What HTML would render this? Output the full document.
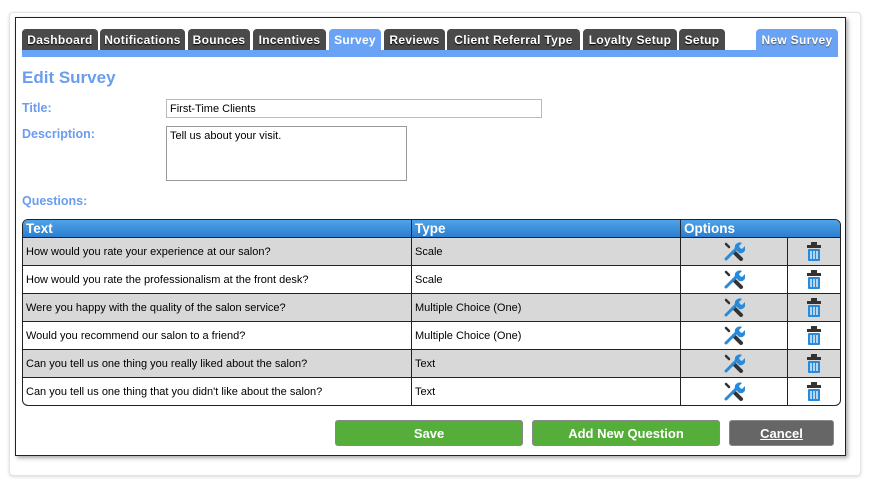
<!DOCTYPE html>
<html><head><style>
body{margin:0;width:870px;height:483px;background:#fff;font-family:"Liberation Sans",sans-serif;position:relative;overflow:hidden}
.card{position:absolute;left:9px;top:12px;width:850px;height:462px;border:1px solid #e4e4e4;border-radius:4px;box-shadow:0 1px 3px rgba(0,0,0,.15);background:#fff}
.box{position:absolute;left:15px;top:17px;width:829px;height:437px;border:1px solid #222;box-shadow:2px 2px 4px rgba(0,0,0,.35);background:#fff}
.tab{position:absolute;top:29px;height:21px;background:#4a4a4a;color:#fff;font-weight:bold;font-size:12px;line-height:22px;text-align:center;border-radius:4px 4px 0 0;letter-spacing:.3px;text-shadow:0 1px 1px #000}
.tab.a{background:#6aa3f5;text-shadow:none}
.bar{position:absolute;left:22px;top:50px;width:816px;height:7px;background:#6aa3f5}
.lbl{position:absolute;left:22px;color:#6a9cf0;font-weight:bold;font-size:12.5px}
h1{position:absolute;left:22px;top:68px;margin:0;font-size:17px;color:#6a9cf0}
.inp{position:absolute;border:1px solid #bbb;background:#fff;font-size:11px;padding:3px 3px;box-sizing:border-box}
table{position:absolute;left:22px;top:219px;width:819px;border-collapse:separate;border-spacing:0;border:1px solid #222;border-radius:6px;overflow:hidden;font-size:11px}
th{background:linear-gradient(#4fa3e6,#2b7ed0);color:#fff;text-align:left;font-size:13.5px;height:17px;padding:0 3px;border-left:1px solid #222;border-bottom:1px solid #222}
td{height:27px;padding:0 3px;border-left:1px solid #222;border-top:1px solid #222}
tr td:first-child,tr th:first-child{border-left:none}
tr:nth-child(2) td{border-top:none}
tr.g td{background:#d8d8d8}
td.c{text-align:center;padding:0}
td.c svg{vertical-align:middle}
.btn{position:absolute;top:420px;height:26px;border-radius:3px;color:#fff;font-weight:bold;font-size:13px;line-height:26px;text-align:center;border:1px solid #888;box-sizing:border-box}
</style></head><body>
<div class="card"></div>
<div class="box"></div>
<div class="tab" style="left:22px;width:76px">Dashboard</div>
<div class="tab" style="left:100px;width:85px">Notifications</div>
<div class="tab" style="left:188px;width:62px">Bounces</div>
<div class="tab" style="left:253px;width:73px">Incentives</div>
<div class="tab a" style="left:329px;width:52px">Survey</div>
<div class="tab" style="left:384px;width:61px">Reviews</div>
<div class="tab" style="left:447px;width:133px">Client Referral Type</div>
<div class="tab" style="left:583px;width:94px">Loyalty Setup</div>
<div class="tab" style="left:679px;width:46px">Setup</div>
<div class="tab a" style="left:756px;width:82px;text-shadow:0 1px 1px #555">New Survey</div>
<div class="bar"></div>
<h1>Edit Survey</h1>
<div class="lbl" style="top:101px">Title:</div>
<div class="inp" style="left:166px;top:99px;width:376px;height:19px;padding-top:3px">First-Time Clients</div>
<div class="lbl" style="top:127px">Description:</div>
<div class="inp" style="left:166px;top:126px;width:241px;height:55px;border-color:#999">Tell us about your visit.</div>
<div class="lbl" style="top:194px">Questions:</div>
<svg width="0" height="0" style="position:absolute"><defs>
<g id="w"><path d="M3 3 L6 6" stroke="#333" stroke-width="2.5" stroke-linecap="round"/><path d="M11 11 L18 18" stroke="#333" stroke-width="4" stroke-linecap="round"/><path d="M3 18 L13 8" stroke="#2a8ad8" stroke-width="3" stroke-linecap="round"/><path d="M12 8 a5 5 0 0 1 7-6 l-3 3 1 2 2 1 3-3 a5 5 0 0 1 -6 7z" fill="#2a8ad8"/></g>
<g id="t"><rect x="6" y="0" width="6" height="3" fill="#333"/><rect x="2" y="3" width="14" height="3" fill="#333"/><rect x="3" y="7" width="12" height="12" rx="1" fill="#2a8ad8"/><path d="M6 9v8M9 9v8M12 9v8" stroke="#fff" stroke-width="1.3"/></g></defs></svg>
<table>
<tr><th style="width:382px">Text</th><th style="width:262px">Type</th><th style="width:100px">Options</th><th style="border-left:none"></th></tr>
<tr class="g"><td>How would you rate your experience at our salon?</td><td>Scale</td><td class="c"><svg width="22" height="21"><use href="#w"/></svg></td><td class="c"><svg width="18" height="19"><use href="#t"/></svg></td></tr>
<tr><td>How would you rate the professionalism at the front desk?</td><td>Scale</td><td class="c"><svg width="22" height="21"><use href="#w"/></svg></td><td class="c"><svg width="18" height="19"><use href="#t"/></svg></td></tr>
<tr class="g"><td>Were you happy with the quality of the salon service?</td><td>Multiple Choice (One)</td><td class="c"><svg width="22" height="21"><use href="#w"/></svg></td><td class="c"><svg width="18" height="19"><use href="#t"/></svg></td></tr>
<tr><td>Would you recommend our salon to a friend?</td><td>Multiple Choice (One)</td><td class="c"><svg width="22" height="21"><use href="#w"/></svg></td><td class="c"><svg width="18" height="19"><use href="#t"/></svg></td></tr>
<tr class="g"><td>Can you tell us one thing you really liked about the salon?</td><td>Text</td><td class="c"><svg width="22" height="21"><use href="#w"/></svg></td><td class="c"><svg width="18" height="19"><use href="#t"/></svg></td></tr>
<tr><td>Can you tell us one thing that you didn't like about the salon?</td><td>Text</td><td class="c"><svg width="22" height="21"><use href="#w"/></svg></td><td class="c"><svg width="18" height="19"><use href="#t"/></svg></td></tr>
</table>
<div class="btn" style="left:335px;width:188px;background:#55ad3a">Save</div>
<div class="btn" style="left:532px;width:188px;background:#55ad3a">Add New Question</div>
<div class="btn" style="left:729px;width:105px;background:#666;text-decoration:underline">Cancel</div>
</body></html>
